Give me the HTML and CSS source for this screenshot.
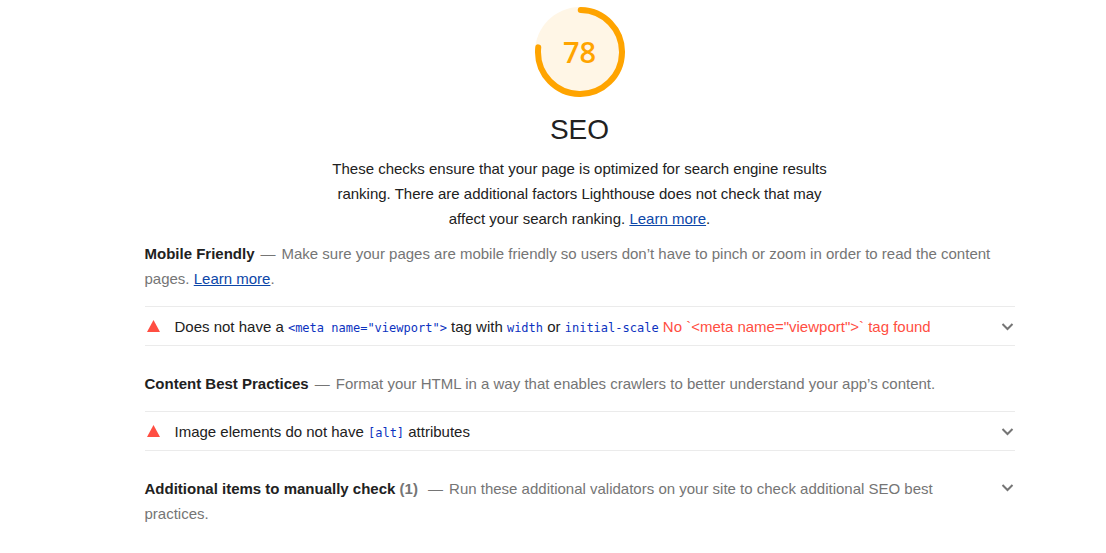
FILE: index.html
```html
<!DOCTYPE html>
<html lang="en">
<head>
<meta charset="utf-8">
<title>SEO report</title>
<link rel="stylesheet" href="styles.css">
</head>
<body>
<main class="report">
  <header class="category">
    <div class="gauge">
      <svg class="gauge-ring" viewBox="0 0 90 90" aria-hidden="true">
        <circle class="gauge-base" cx="45" cy="45" r="45"/>
        <circle class="gauge-arc" cx="45" cy="45" r="42" pathLength="100" stroke-dasharray="76.500 100" transform="rotate(-89 45 45)"/>
      </svg>
      <span class="gauge-score">78</span>
    </div>
    <h1 class="category-title">SEO</h1>
    <p class="category-text">These checks ensure that your page is optimized for search engine results ranking. There are additional factors Lighthouse does not check that may affect your search ranking. <a href="#seo">Learn more</a>.</p>
  </header>

  <section class="group">
    <p class="group-head"><strong>Mobile Friendly</strong><span class="group-text">Make sure your pages are mobile friendly so users don’t have to pinch or zoom in order to read the content pages. <a href="#mobile">Learn more</a>.</span></p>
    <details class="audit">
      <summary>
        <svg class="fail" viewBox="0 0 13 13" aria-hidden="true"><path d="M6.500 0L13 12H0z"/></svg>
        <span class="audit-title">Does not have a <code>&lt;meta name="viewport"&gt;</code> tag with <code>width</code> or <code>initial-scale</code> <span class="audit-note">No `&lt;meta name="viewport"&gt;` tag found</span></span>
        <svg class="chevron" viewBox="0 0 14 8" aria-hidden="true"><path d="M1.500 1l5 5 5-5"/></svg>
      </summary>
    </details>
  </section>

  <section class="group">
    <p class="group-head"><strong>Content Best Practices</strong><span class="group-text">Format your HTML in a way that enables crawlers to better understand your app’s content.</span></p>
    <details class="audit">
      <summary>
        <svg class="fail" viewBox="0 0 13 13" aria-hidden="true"><path d="M6.500 0L13 12H0z"/></svg>
        <span class="audit-title">Image elements do not have <code>[alt]</code> attributes</span>
        <svg class="chevron" viewBox="0 0 14 8" aria-hidden="true"><path d="M1.500 1l5 5 5-5"/></svg>
      </summary>
    </details>
  </section>

  <details class="manual">
    <summary class="manual-head">
      <span class="manual-text"><strong>Additional items to manually check <span class="count">(1)</span></strong> <span class="group-text">Run these additional validators on your site to check additional SEO best practices.</span></span>
      <svg class="chevron" viewBox="0 0 14 8" aria-hidden="true"><path d="M1.500 1l5 5 5-5"/></svg>
    </summary>
  </details>
</main>
</body>
</html>
```
FILE: styles.css
```css
body {
  margin: 0;
  padding-left: 53px;
  background: #fff;
  color: #212121;
  font: 15px/25px "Liberation Sans", Arial, sans-serif;
}

.report {
  max-width: 870px;
  margin: 0 auto;
  padding: 7px 0 24px;
}

a { color: #0c46a8; }
summary { list-style: none; cursor: pointer; }
h1, p { margin: 0; }

.category {
  display: flex;
  flex-direction: column;
  align-items: center;
  text-align: center;
}

.gauge { display: grid; width: 90px; height: 90px; place-items: center; }
.gauge-ring, .gauge-score { grid-area: 1 / 1; }
.gauge-base { fill: #fff6e6; }
.gauge-arc { fill: none; stroke: #ffa400; stroke-width: 6; stroke-linecap: round; }
.gauge-score {
  color: #ffa400;
  font: 600 29px/40px "Open Sans", "Noto Sans", sans-serif;
}

.category-title { margin: 17px 0 10px; font-size: 28px; line-height: 32px; font-weight: 400; }
.category-text { max-width: 500px; }

.group { margin-bottom: 25px; }
.group-head { margin-top: 10px; }
.group-text { color: #757575; }
.group-text::before { content: "—"; margin: 0 6px; }
.count { color: #757575; }

.audit {
  margin-top: 15px;
  border-top: 1px solid #ebebeb;
  border-bottom: 1px solid #ebebeb;
}
.audit summary { display: flex; align-items: center; padding: 7px 0 6px; }
.audit-title { flex: 1; }
.fail { flex: none; width: 13px; height: 13px; margin: 0 15px 0 2px; fill: #ff4e42; }
.chevron { flex: none; width: 14px; height: 8px; fill: none; stroke: #757575; stroke-width: 2; }
code { color: #0c32c0; font: 12px "DejaVu Sans Mono", monospace; }
.audit-note { color: #ff4e42; }

.manual-head { display: flex; align-items: flex-start; gap: 48px; }
.manual-head .chevron { margin-top: 8px; }
```
